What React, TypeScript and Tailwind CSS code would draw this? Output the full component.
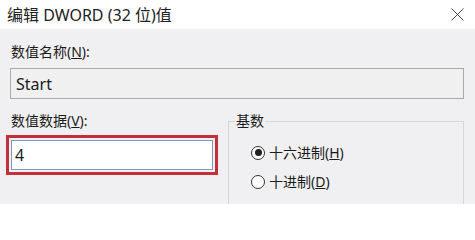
import React from 'react';

const font = { fontFamily: '"Noto Sans", "Noto Sans CJK SC", sans-serif' };

function Radio({ checked, children }: { checked?: boolean; children: React.ReactNode }) {
  return (
    <div className="flex items-center h-[29px]">
      <span className="w-[14px] h-[14px] rounded-full border border-[#333] bg-white flex items-center justify-center">
        {checked && <span className="w-[7px] h-[7px] rounded-full bg-[#1f1f1f]" />}
      </span>
      <span className="ml-[4px] text-[14px] leading-[18px] text-[#1b1b1b]">{children}</span>
    </div>
  );
}

export default function App() {
  return (
    <div className="w-[475px] h-[204px] overflow-hidden bg-[#f0eff1] text-[#1b1b1b]" style={font}>
      {/* title bar */}
      <div className="h-[29px] bg-white flex items-center justify-between pl-[7px] pr-[11px]">
        <span className="text-[16px] leading-[20px] text-[#222]">编辑 DWORD (32 位)值</span>
        <svg width="13" height="13" viewBox="0 0 13 13" className="text-[#444]">
          <path d="M0.5 0.5 L12.5 12.5 M12.5 0.5 L0.5 12.5" stroke="currentColor" strokeWidth="1" fill="none" />
        </svg>
      </div>

      <div className="pl-[10px] pr-[11px] pt-[14px]">
        <div className="pl-[1px] text-[14px] leading-[18px]">
          数值名称(<span className="underline">N</span>):
        </div>
        <div className="mt-[7px] h-[31px] border border-[#a9a9a9] bg-[#f0f0f0] flex items-center pl-[5px] text-[16px]">
          Start
        </div>

        <div className="flex mt-[13px]">
          <div className="w-[208px]">
            <div className="pl-[1px] text-[14px] leading-[18px]">
              数值数据(<span className="underline">V</span>):
            </div>
            <div className="mt-[5px] -ml-[4px] w-[212px] border-[3px] border-[#c3303a] p-[2px]">
              <div className="h-[30px] border border-[#7a9bbd] bg-white flex items-center pl-[3px] text-[16px]">
                4
              </div>
            </div>
          </div>

          <fieldset className="ml-[10px] flex-1 border border-[#d6d6d8] pl-[6px] pt-[8px] h-[100px]">
            <legend className="px-[1px] text-[14px] leading-[18px]">基数</legend>
            <div className="pl-[16px]">
              <Radio checked>
                十六进制(<span className="underline">H</span>)
              </Radio>
              <Radio>
                十进制(<span className="underline">D</span>)
              </Radio>
            </div>
          </fieldset>
        </div>
      </div>
    </div>
  );
}
